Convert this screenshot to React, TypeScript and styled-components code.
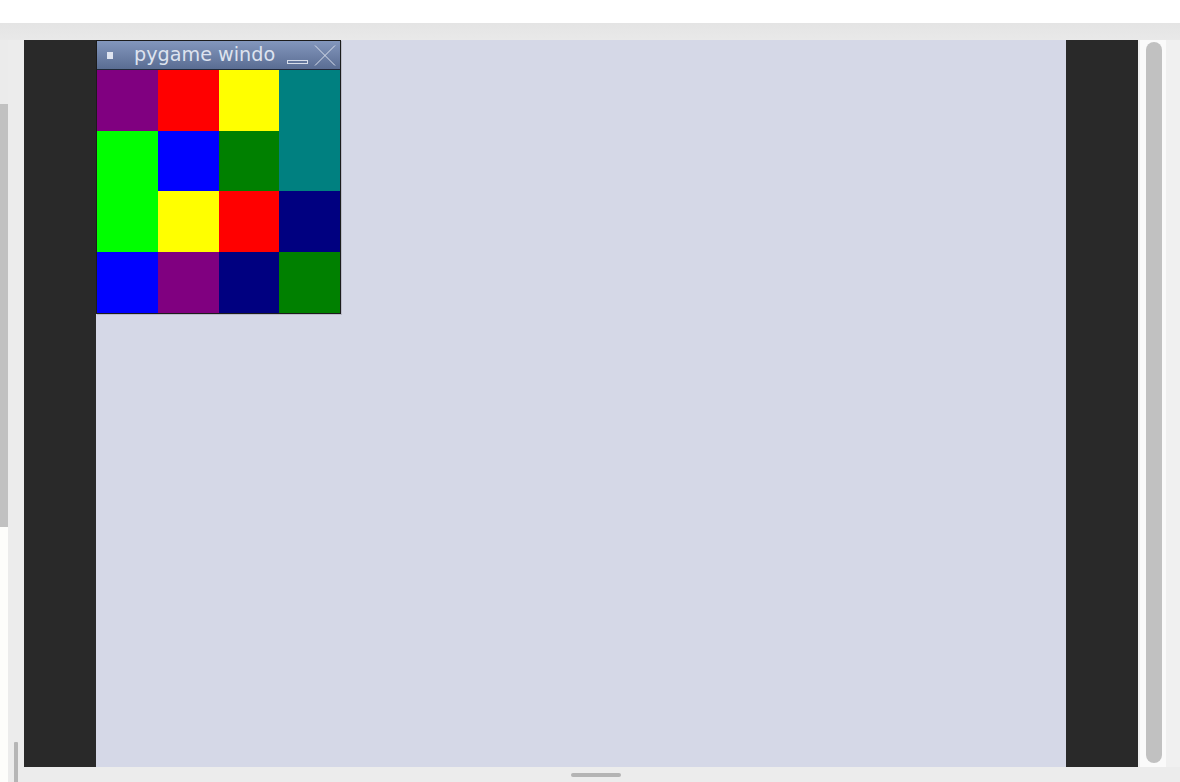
import React from "react";
import styled, { createGlobalStyle } from "styled-components";

const Global = createGlobalStyle`
  html, body { margin: 0; padding: 0; background: #ffffff; }
  body { font-family: "DejaVu Sans", sans-serif; overflow: hidden; }
`;

const Page = styled.div`
  width: 1180px;
  height: 782px;
  display: flex;
  flex-direction: column;
  background: #ffffff;
`;

const TopStrip = styled.div`
  height: 23px;
  background: #ffffff;
`;

const Header = styled.div`
  height: 17px;
  background: linear-gradient(#e4e4e4, #e9e9e9);
`;

const Main = styled.div`
  flex: 1;
  display: flex;
  min-height: 0;
`;

const LeftRail = styled.div`
  width: 24px;
  display: flex;
`;

const Strip = styled.div`
  width: 8px;
  display: flex;
  flex-direction: column;
`;

const StripPart = styled.div<{ $h?: number; $c: string }>`
  background: ${(p) => p.$c};
  ${(p) => (p.$h ? `height: ${p.$h}px;` : "flex: 1;")}
`;

const Gutter = styled.div`
  width: 16px;
  background: #ececec;
  display: flex;
  flex-direction: column;
  justify-content: flex-end;
`;

const GutterHandle = styled.div`
  width: 4px;
  height: 40px;
  margin-left: 6px;
  background: #b6b6b6;
  border-radius: 1px 1px 0 0;
`;

const RightArea = styled.div`
  flex: 1;
  display: flex;
  flex-direction: column;
`;

const ContentRow = styled.div`
  height: 727px;
  display: flex;
`;

const DarkSide = styled.div`
  width: 72px;
  background: #292929;
`;

const Canvas = styled.div`
  width: 970px;
  background: #d5d8e7;
`;

const Gap = styled.div<{ $w: number }>`
  width: ${(p) => p.$w}px;
  background: #f0f0f0;
`;

const Track = styled.div`
  width: 26px;
  background: #fafafa;
  padding: 2px 4px 4px 6px;
  box-sizing: border-box;
  display: flex;
`;

const Thumb = styled.div`
  width: 16px;
  background: #c1c1c1;
  border-radius: 8px;
`;

const BottomBar = styled.div`
  flex: 1;
  background: #ececec;
  padding-top: 6px;
  padding-left: 547px;
  box-sizing: border-box;
`;

const BottomHandle = styled.div`
  width: 50px;
  height: 4px;
  background: #b4b4b4;
  border-radius: 2px;
`;

const PyWindow = styled.div`
  width: 243px;
  border: 1px solid #1c1c1c;
  box-shadow: 1px 1px 0 #b9bbc9;
  display: flex;
  flex-direction: column;
`;

const TitleBar = styled.div`
  height: 28px;
  background: linear-gradient(#8397bd, #5a6d93);
  border-bottom: 1px solid #202838;
  display: flex;
  align-items: center;
  color: #dde3ef;
  overflow: hidden;
`;

const TitleIcon = styled.div`
  width: 6px;
  height: 7px;
  margin-left: 10px;
  background: #dfe4f0;
  flex: none;
`;

const TitleText = styled.div`
  margin-left: 21px;
  width: 151px;
  font-family: "DejaVu Sans", sans-serif;
  font-size: 19.2px;
  line-height: 28px;
  white-space: nowrap;
  overflow: hidden;
  flex: none;
`;

const Controls = styled.div`
  display: flex;
  align-items: center;
  gap: 5px;
  margin-left: 2px;
  flex: none;
`;

const Grid = styled.div`
  display: grid;
  grid-template-columns: repeat(4, 1fr);
  grid-template-rows: 61px 60px 61px 61px;
`;

const Cell = styled.div<{ $c: string }>`
  background: ${(p) => p.$c};
`;

const cells = [
  "#800080", "#ff0000", "#ffff00", "#008080",
  "#00ff00", "#0000ff", "#008000", "#008080",
  "#00ff00", "#ffff00", "#ff0000", "#000080",
  "#0000ff", "#800080", "#000080", "#008000",
];

export default function App() {
  return (
    <Page>
      <Global />
      <TopStrip />
      <Header />
      <Main>
        <LeftRail>
          <Strip>
            <StripPart $h={64} $c="#ebebeb" />
            <StripPart $h={423} $c="#c1c1c1" />
            <StripPart $c="#fdfdfb" />
          </Strip>
          <Gutter>
            <GutterHandle />
          </Gutter>
        </LeftRail>
        <RightArea>
          <ContentRow>
            <DarkSide />
            <Canvas>
              <PyWindow>
                <TitleBar>
                  <TitleIcon />
                  <TitleText>pygame windo</TitleText>
                  <Controls>
                    <svg width="22" height="21" viewBox="0 0 22 21">
                      <rect x="0.5" y="15.5" width="20" height="3" fill="none" stroke="#d8deea" strokeWidth="1" />
                    </svg>
                    <svg width="22" height="21" viewBox="0 0 22 21">
                      <path d="M1 0.5 L21 20.5 M21 0.5 L1 20.5" stroke="#d8deea" strokeWidth="1" fill="none" />
                    </svg>
                  </Controls>
                </TitleBar>
                <Grid>
                  {cells.map((c, i) => (
                    <Cell key={i} $c={c} />
                  ))}
                </Grid>
              </PyWindow>
            </Canvas>
            <DarkSide />
            <Gap $w={2} />
            <Track>
              <Thumb />
            </Track>
            <Gap $w={14} />
          </ContentRow>
          <BottomBar>
            <BottomHandle />
          </BottomBar>
        </RightArea>
      </Main>
    </Page>
  );
}
